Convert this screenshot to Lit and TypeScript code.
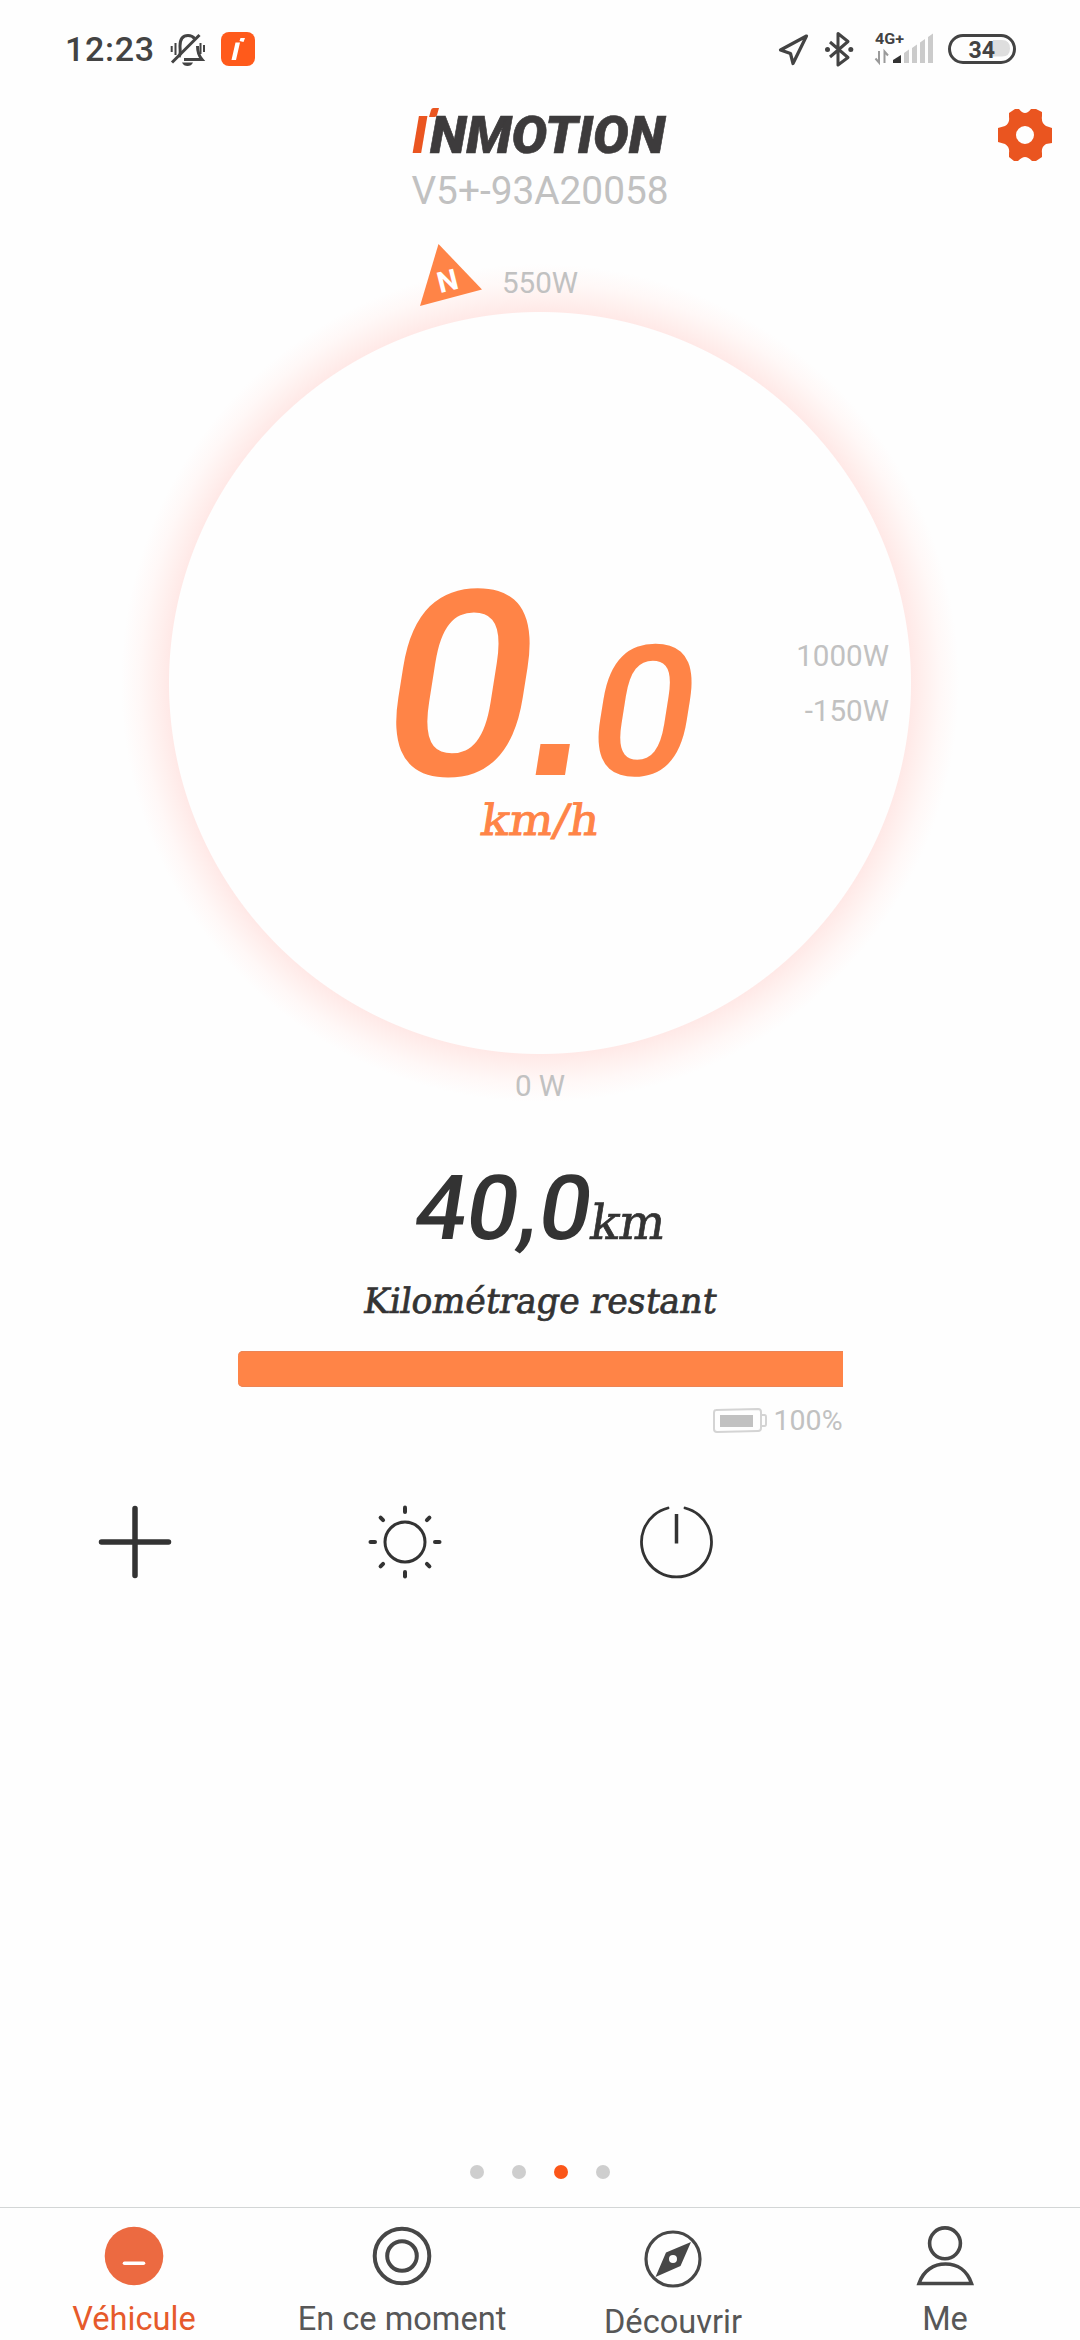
import { LitElement, html, svg, css } from "lit";
import { customElement, property } from "lit/decorators.js";
import { classMap } from "lit/directives/class-map.js";

@customElement("status-bar")
class StatusBar extends LitElement {
  static styles = css`
    :host { display: flex; justify-content: space-between; align-items: flex-start; height: 96px; box-sizing: border-box; padding: 28px 60px 0 65px; font-family: Roboto, sans-serif; color: #434343; }
    .side { display: flex; height: 42px; align-items: center; }
    .time { font-size: 34px; font-weight: 500; line-height: 42px; letter-spacing: 0.7px; width: 103px; }
    svg { display: block; }
    text { font-family: Roboto, sans-serif; font-weight: 700; fill: #434343; }
  `;
  render() {
    return html`
      <div class="side">
        <span class="time">12:23</span>
        <svg width="90" height="42" viewBox="168 28 90 42">
          <g fill="none" stroke="#434343" stroke-width="3">
            <path d="M179 57C181 54 180 50 180 46C180 39 183 35.500 188 35.500C191 35.500 193 36.500 194.500 38.500M197.500 46C197.500 53 199 56 202 59.500H184"/>
            <path d="M172 62.500L199.500 35"/>
            <path d="M175.500 43V55M171.700 46V52M200.500 43V54M204 45V52" stroke-width="2"/>
          </g>
          <path d="M182 62.500H193C192 65 190 66 187.500 66C185 66 183 65 182 62.500Z" fill="#434343"/>
          <rect x="221" y="32" width="34" height="34" rx="8" fill="#ff5a1b"/>
          <path d="M231.500 60L235.500 42.500H240L236 60ZM239.500 41L240.500 38H245L243.500 42Z" fill="#fff"/>
        </svg>
      </div>
      <div class="side">
        <svg width="244" height="42" viewBox="776 28 244 42">
          <path d="M806.500 36L780.500 50L790.500 53.500L793 63.500Z" fill="none" stroke="#434343" stroke-width="3.200" stroke-linejoin="round"/>
          <path d="M830 42L848 57.500L838 65V33.500L848 41.500L830 57" fill="none" stroke="#434343" stroke-width="3" stroke-linejoin="round"/>
          <circle cx="827.500" cy="49.500" r="2.500" fill="#434343"/><circle cx="850.800" cy="49.500" r="2.500" fill="#434343"/>
          <text x="875" y="44" font-size="15.500" textLength="29" lengthAdjust="spacingAndGlyphs">4G+</text>
          <path d="M879 51V62.500L875.500 58.500M884.500 63V51.500L888 55.500" fill="none" stroke="#9a9a9a" stroke-width="2"/>
          <path d="M893 63V60L901 55V63Z" fill="#333"/>
          <path d="M904 63V53L909 49.500V63ZM912 63V48L917 44.500V63ZM920 63V42.500L925 39V63ZM928 63V37L933 33.500V63Z" fill="#cbcbcb"/>
          <path d="M993 40H1002Q1010 40 1010 48.500Q1010 56.500 1002 56.500H993Z" fill="#dedede"/>
          <rect x="949.500" y="35.500" width="65" height="27" rx="13.500" fill="none" stroke="#434343" stroke-width="3"/>
          <text x="968.500" y="57.800" font-size="24" textLength="26.500" lengthAdjust="spacingAndGlyphs">34</text>
        </svg>
      </div>`;
  }
}

@customElement("app-header")
class AppHeader extends LitElement {
  static styles = css`
    :host { display: grid; grid-template-columns: 1fr 280px 1fr; height: 120px; box-sizing: border-box; padding: 0 27px; font-family: Roboto, sans-serif; }
    .brand { grid-column: 2; display: flex; flex-direction: column; align-items: center; }
    .gear { justify-self: end; padding-top: 11px; }
    svg { display: block; }
    .word { font: italic 900 51px Roboto, sans-serif; fill: #3d3b3c; stroke: #3d3b3c; stroke-width: 0.6; }
    .lead { fill: #ea5520; stroke: #ea5520; stroke-width: 0; }
    .model { font-size: 38.800px; line-height: 46px; color: #c1c1c1; white-space: nowrap; }
  `;
  render() {
    return html`
      <div class="brand">
        <svg width="280" height="72" viewBox="400 96 280 72">
          <text class="word lead" x="412" y="153">I</text>
          <path d="M429 117L431 110Q431.500 108 433.500 108H439L437 115Q436.500 117 434.500 117Z" fill="#ea5520"/>
          <text class="word" x="430" y="153" textLength="235" lengthAdjust="spacingAndGlyphs">NMOTION</text>
        </svg>
        <div class="model">V5+-93A20058</div>
      </div>
      <div class="gear">
        <svg width="56" height="56" viewBox="-28 -28 56 56">
          <path fill="#ea5520" fill-rule="evenodd" d="M-10 -26H-6Q-3 -22 0 -22Q3 -22 6 -26H11L17 -23V-19Q16 -12 21 -9L27 -7V8L21 9Q16 12 17 18V22L11 26H7Q3 22 0 22Q-3 22 -7 26H-11L-16 22V18Q-15 12 -20 9L-27 7V-7L-20 -9Q-15 -12 -16 -18V-22ZM9 0A9 9 0 1 0 -9 0A9 9 0 1 0 9 0Z"/>
        </svg>
      </div>`;
  }
}

@customElement("speed-dial")
class SpeedDial extends LitElement {
  static styles = css`
    :host { position: relative; display: flex; flex-direction: column; align-items: center; height: 894px; box-sizing: border-box; padding-top: 48px; font-family: Roboto, sans-serif; font-size: 29.600px; line-height: 38px; color: #c1c1c1;
      background: radial-gradient(circle at 540px 467px, #fefefe 370.500px, #ffe9e7 371.500px, #fff0ee 384px, #fff8f7 400px, #fefefe 419px); }
    .dial { display: grid; grid-template-columns: 1fr 320px 1fr; align-items: center; width: 742px; height: 742px; margin: 10px 0 13px; }
    .speed { grid-column: 2; display: block; overflow: visible; }
    .limits { display: flex; flex-direction: column; gap: 17px; justify-self: end; padding-right: 22px; text-align: right; }
    .digits { font-family: Roboto, sans-serif; font-weight: 500; fill: #ff8447; }
    .point { font-family: "Liberation Sans", sans-serif; font-weight: 700; fill: #ff8447; }
    .unit { font-family: "DejaVu Serif", serif; fill: #ff8447; stroke: #ff8447; stroke-width: 0.9; }
    .north { position: absolute; left: 415px; top: 24px; }
    .north text { font: 700 29px Roboto, sans-serif; fill: #fff; }
  `;
  render() {
    return html`
      <div>550W</div>
      <div class="dial">
        <svg class="speed" width="320" height="400" viewBox="380 483 320 400">
          <text class="digits" transform="translate(372.500 775) skewX(-9) scale(1.030 1)" font-size="259">0</text>
          <text class="point" transform="translate(521.500 775) skewX(-9)" font-size="208">.</text>
          <text class="digits" transform="translate(582 775) skewX(-9) scale(1.020 1)" font-size="182">0</text>
          <text class="unit" transform="translate(479 835) skewX(-9)" font-size="43" textLength="118" lengthAdjust="spacingAndGlyphs">km/h</text>
        </svg>
        <div class="limits"><span>1000W</span><span>-150W</span></div>
      </div>
      <div>0 W</div>
      <svg class="north" width="72" height="72" viewBox="415 240 72 72">
        <path d="M438.500 244L482 289.500L420 306Z" fill="#ff8447"/>
        <text transform="translate(447.500 281) rotate(-14)" text-anchor="middle" y="10">N</text>
      </svg>`;
  }
}

@customElement("range-panel")
class RangePanel extends LitElement {
  @property({ type: Number }) level = 100;
  static styles = css`
    :host { display: flex; flex-direction: column; align-items: center; height: 370px; box-sizing: border-box; padding-top: 30px; font-family: Roboto, sans-serif; }
    svg { display: block; }
    .num { font: 500 90px Roboto, sans-serif; fill: #333; }
    .slab { font-family: "DejaVu Serif", serif; fill: #333; stroke: #333; stroke-width: 0.7; }
    .track { width: 605px; height: 36px; margin-top: 11px; }
    .fill { height: 100%; border-radius: 5px 0 0 5px; background: #ff8447; box-shadow: inset 0 1px #ec8455, inset 0 -1px #ec8455; }
    .charge { display: flex; width: 605px; justify-content: flex-end; align-items: center; gap: 7px; margin-top: 15px; font-size: 28.500px; line-height: 38px; color: #c1c1c1; }
    .charge svg { margin-bottom: 2px; }
  `;
  render() {
    return html`
      <svg width="400" height="200" viewBox="340 1140 400 200">
        <text class="num" transform="translate(411 1238.500) skewX(-9)" textLength="176" lengthAdjust="spacingAndGlyphs">40,0</text>
        <text class="slab" transform="translate(588 1239) skewX(-9)" font-size="48" textLength="75" lengthAdjust="spacingAndGlyphs">km</text>
        <text class="slab" transform="translate(362 1312.700) skewX(-9)" font-size="35" textLength="353" lengthAdjust="spacingAndGlyphs">Kilométrage restant</text>
      </svg>
      <div class="track"><div class="fill" style="width:${this.level}%"></div></div>
      <div class="charge">
        <svg width="55" height="27" viewBox="710 1406 55 27">
          <path d="M714 1409L756 1408Q759 1408 759 1411V1427Q759 1430 756 1430L715 1431Q712 1431 712 1428V1412Q712 1409 714 1409ZM760 1414H762.500Q764 1414 764 1416V1423Q764 1425 762.500 1425H760" fill="none" stroke="#d4d4d4" stroke-width="2"/>
          <rect x="718" y="1414" width="33" height="12" fill="#c1c1c1"/>
        </svg>
        <span>${this.level}%</span>
      </div>`;
  }
}

const rays = [0, 45, 90, 135, 180, 225, 270, 315];

@customElement("action-row")
class ActionRow extends LitElement {
  static styles = css`
    :host { display: grid; grid-template-columns: repeat(4, 270px); height: 124px; align-items: center; justify-items: center; }
    svg { display: block; fill: none; stroke: #333; stroke-linecap: round; }
  `;
  render() {
    return html`
      <svg width="76" height="76" viewBox="-38 -38 76 76" stroke-width="5.500"><path d="M-33.500 0H33.500M0 -33.500V33.500"/></svg>
      <svg width="76" height="76" viewBox="-38 -38 76 76" stroke-width="3">
        <circle r="20"/>
        ${rays.map((a) => svg`<path stroke-width="4" d="M0 ${a % 90 ? -31 : -30}V-34.500" transform="rotate(${a})"/>`)}
      </svg>
      <svg width="76" height="76" viewBox="-39 -38 76 76" stroke-width="2.800"><path d="M-8 -34A35 35 0 1 0 9 -34"/><path d="M.5 -28V1.500" stroke-width="3.500" stroke-linecap="butt"/></svg>`;
  }
}

interface Tab { label: string; active?: boolean; low?: boolean; icon: unknown; }

const tabs: Tab[] = [
  { label: "Véhicule", active: true, icon: svg`<circle r="29.300" fill="#ec6a41"/><path d="M-9.500 7.300H9.500" stroke="#fff" stroke-width="3.600" stroke-linecap="round"/>` },
  { label: "En ce moment", icon: svg`<g fill="none" stroke="#474747" stroke-width="4"><circle r="27.300"/><circle r="14.800"/></g>` },
  { label: "Découvrir", low: true, icon: svg`<circle r="27" fill="none" stroke="#474747" stroke-width="3.200"/><path fill-rule="evenodd" fill="#474747" d="M18 -17L7.500 7L-17.500 18L-7 -6.500ZM4 0A4 4 0 1 0 -4 0A4 4 0 1 0 4 0Z"/>` },
  { label: "Me", icon: svg`<g fill="none" stroke="#474747" stroke-width="3.600"><circle cy="-12.700" r="15.400"/><path d="M-26 27.500C-21.500 14 -11 8 .500 8C12 8 22 14 26.500 27.500Z"/></g>` },
];

@customElement("tab-bar")
class TabBar extends LitElement {
  static styles = css`
    :host { display: grid; grid-template-columns: 268px 268px 274px 270px; height: 133px; box-sizing: border-box; border-top: 1px solid #d3d6d6; font-family: Roboto, sans-serif; }
    .tab { display: flex; flex-direction: column; align-items: center; padding-top: 16px; font-size: 32.600px; line-height: 40px; color: #575757; white-space: nowrap; }
    .low { padding-top: 19px; }
    .active { color: #e65a2b; }
    svg { display: block; margin-bottom: 11px; }
  `;
  render() {
    return tabs.map((t) => html`
      <div class=${classMap({ tab: true, active: !!t.active, low: !!t.low })}>
        <svg width="64" height="64" viewBox="-32 -32 64 64">${t.icon}</svg>
        <span>${t.label}</span>
      </div>`);
  }
}

@customElement("app-root")
class AppRoot extends LitElement {
  static styles = css`
    :host { display: flex; flex-direction: column; width: 1080px; height: 2340px; overflow: hidden; background: #fefefe; }
    .space { flex: 1; }
    .dots { display: flex; justify-content: center; gap: 28px; padding-bottom: 28px; }
    .dot { width: 14px; height: 14px; border-radius: 50%; background: #cecece; }
    .on { background: #fb5619; }
  `;
  render() {
    return html`
      <status-bar></status-bar>
      <app-header></app-header>
      <speed-dial></speed-dial>
      <range-panel .level=${100}></range-panel>
      <action-row></action-row>
      <div class="space"></div>
      <div class="dots">${[0, 1, 2, 3].map((i) => html`<span class=${classMap({ dot: true, on: i === 2 })}></span>`)}</div>
      <tab-bar></tab-bar>`;
  }
}
